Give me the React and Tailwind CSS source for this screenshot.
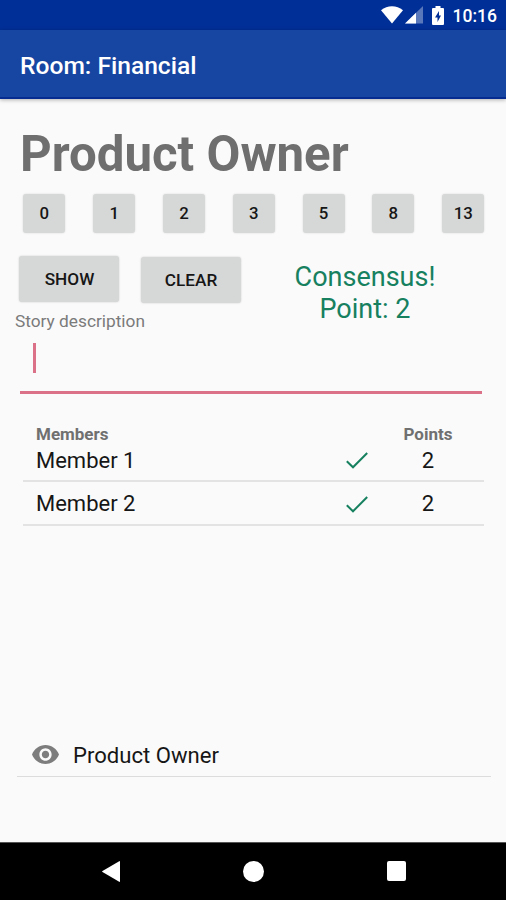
import React from "react";

const points = ["0", "1", "2", "3", "5", "8", "13"];

const members = [
  { name: "Member 1", point: "2" },
  { name: "Member 2", point: "2" },
];

const StatusBar = () => (
  <div className="h-[30px] bg-[#002f97] flex items-center justify-end pr-[9px] text-white">
    <svg width="22" height="18" viewBox="0 0 22 18" fill="currentColor">
      <path d="M0 4.2C6.4-1 15.600-1 22 4.200L11 17.500Z" />
    </svg>
    <svg width="18" height="18" viewBox="0 0 18 18" fill="currentColor" className="ml-[2px]">
      <path d="M18 0V17.500H0Z" opacity="0.35" />
      <path d="M11 6.800V17.500H0Z" />
    </svg>
    <svg width="12" height="19" viewBox="0 0 12 19" className="ml-[9px]">
      <path d="M3.500 0h5v2H11q1 0 1 1v15q0 1-1 1H1q-1 0-1-1V3q0-1 1-1h2.500Z" fill="currentColor" />
      <path d="M7 5 3 11.500h2.500V16L9 9.500H7Z" fill="#002f97" />
    </svg>
    <span className="ml-[9px] pt-px text-[17.500px] leading-[30px] font-medium">10:16</span>
  </div>
);

const CheckIcon = () => (
  <svg width="22" height="17" viewBox="0 0 22 17" fill="none" stroke="#16805f" strokeWidth="2">
    <path d="M0.800 9.200 7 15.300 21.200 1" />
  </svg>
);

const EyeIcon = () => (
  <svg width="27" height="19" viewBox="1 4.500 22 15" preserveAspectRatio="none" fill="#7d7d7d">
    <path d="M12 4.500C7 4.500 2.730 7.610 1 12c1.730 4.390 6 7.500 11 7.500s9.270-3.110 11-7.500c-1.730-4.390-6-7.500-11-7.500zM12 17c-2.760 0-5-2.240-5-5s2.240-5 5-5 5 2.240 5 5-2.240 5-5 5zm0-8c-1.660 0-3 1.340-3 3s1.340 3 3 3 3-1.340 3-3-1.340-3-3-3z" />
  </svg>
);

const NavBar = () => (
  <div className="h-[58px] bg-black border-t border-[#555555] flex items-center pb-px pl-[102px] text-white">
    <svg width="19" height="21" viewBox="0 0 19 21" fill="currentColor">
      <path d="M17.200 0.200q0.800-0.400 0.800 0.500v19.600q0 0.900-0.800 0.500L0.500 11q-0.800-0.500 0-1Z" />
    </svg>
    <div className="ml-[122px] size-[21px] rounded-full bg-white" />
    <div className="ml-[123px] w-[19px] h-5 rounded-[2px] bg-white" />
  </div>
);

const App = () => {
  return (
    <div className="w-full h-[900px] flex flex-col bg-[#fafafa] font-[Roboto,sans-serif] overflow-hidden">
      <StatusBar />
      <header className="relative h-[69px] bg-[#1745a2] border-b-2 border-[#062c91] shadow-[0_1px_4px_rgba(0,0,0,0.3)] flex items-center pl-5 pt-[5px]">
        <h1 className="text-[24.600px] leading-8 font-medium text-white">Room: Financial</h1>
      </header>

      <main className="flex-1 flex flex-col">
        <h2 className="mt-[25px] ml-[20px] h-[60px] text-[49.200px] leading-[60px] font-bold text-[#6f6f6f]">
          Product Owner
        </h2>

        {/* Story points */}
        <div className="mt-[10px] pl-[23.400px] pr-[21.800px] flex justify-between">
          {points.map((point) => (
            <button
              key={point}
              className="w-[42px] h-[39px] pt-px rounded-[3px] bg-[#d6d8d7] text-[16.800px] font-medium text-[#161616] shadow-[0_0_2px_rgba(0,0,0,0.15)]"
            >
              {point}
            </button>
          ))}
        </div>

        {/* Actions and result */}
        <div className="mt-[23px] pl-[19px] h-[55px] flex items-start">
          <button className="w-[100px] h-[46px] pt-[2px] pl-px rounded-[3px] bg-[#d6d8d7] text-[17.200px] font-medium text-[#161616] shadow-[0_0_2px_rgba(0,0,0,0.2)]">
            SHOW
          </button>
          <button className="ml-[22px] mt-px w-[100px] h-[46px] pt-[2px] rounded-[3px] bg-[#d6d8d7] text-[17.200px] font-medium text-[#161616] shadow-[0_0_2px_rgba(0,0,0,0.2)]">
            CLEAR
          </button>
          <div className="ml-[24px] mt-[5px] w-[200px] text-center text-[27px] leading-[32px] text-[#16805f]">
            <p>Consensus!</p>
            <p>Point: 2</p>
          </div>
        </div>

        {/* Story input */}
        <div className="w-[200px] pl-[15px] text-[17.300px] leading-5 text-[#7b7b7b]">Story description</div>
        <div className="mt-[12px] ml-[20px] mr-[24px] h-[51px] pl-[13px] border-b-[3px] border-[#db7188]">
          <div className="w-[3px] h-[30px] bg-[#db7188]" />
        </div>

        {/* Members */}
        <div className="mt-[30px] ml-[23px] mr-[22px]">
          <div className="h-[20px] pl-[13px] flex justify-between text-[17px] leading-5 font-bold text-[#707070]">
            <span>Members</span>
            <span className="w-[112px] text-center">Points</span>
          </div>
          {members.map((member, idx) => (
            <div
              key={member.name}
              className={`flex items-center pl-[13px] border-b-2 border-[#e3e3e3] text-[22px] leading-7 text-[#161616] ${
                idx === 0 ? "h-[38px] pb-[3px]" : "h-[44px] pt-[2px]"
              }`}
            >
              <span className="flex-1">{member.name}</span>
              <CheckIcon />
              <span className="ml-[4px] w-[112px] text-center">{member.point}</span>
            </div>
          ))}
        </div>

        <div className="mt-auto mb-[65px] ml-[17px] mr-[15px] h-[44px] pl-[15px] flex items-center border-b border-[#dcdcdc]">
          <EyeIcon />
          <span className="ml-[14px] pt-px text-[22.100px] leading-7 text-[#161616]">Product Owner</span>
        </div>
      </main>

      <NavBar />
    </div>
  );
};

export default App;
